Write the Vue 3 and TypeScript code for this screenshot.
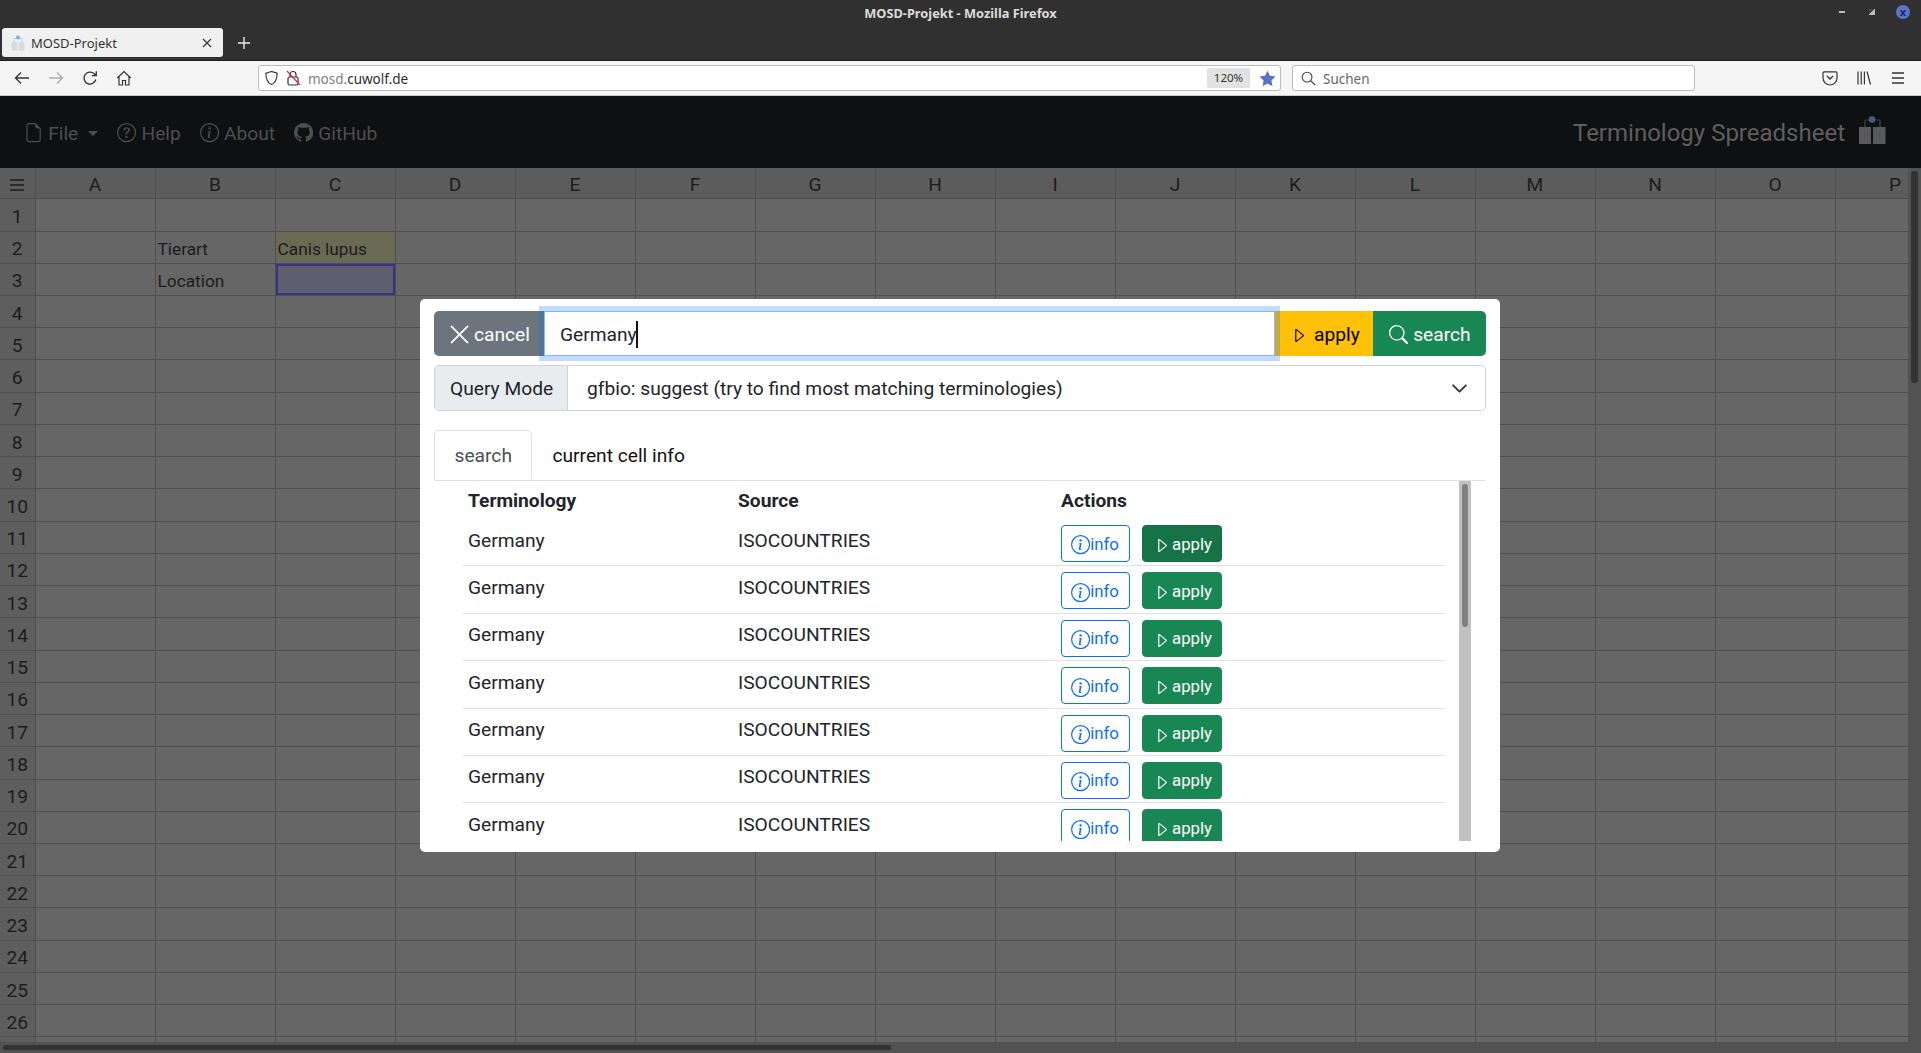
<script setup lang="ts">
const columns: string[] = 'ABCDEFGHIJKLMNOP'.split('')
const rowNumbers: number[] = Array.from({ length: 27 }, (_, i) => i + 1)

function cellText(row: number, col: string): string {
  if (col === 'B' && row === 2) return 'Tierart'
  if (col === 'B' && row === 3) return 'Location'
  if (col === 'C' && row === 2) return 'Canis lupus'
  return ''
}

function cellClass(row: number, col: string): Record<string, boolean> {
  return {
    'cell-found': col === 'C' && row === 2,
    'cell-selected': col === 'C' && row === 3,
  }
}

const results = Array.from({ length: 7 }, (_, i) => ({
  id: i,
  term: 'Germany',
  source: 'ISOCOUNTRIES',
}))

const ICON = {
  play: 'M1 1.300a.4.4 0 0 1 .65-.31l6.300 5.200a.4.4 0 0 1 0 .62l-6.300 5.200A.4.4 0 0 1 1 11.700z',
  circle: 'M8 15A7 7 0 1 1 8 1a7 7 0 0 1 0 14zm0 1A8 8 0 1 0 8 0a8 8 0 0 0 0 16z',
  infoDot: 'm8.93 6.588-2.29.287-.082.38.45.083c.294.07.352.176.288.469l-.738 3.468c-.194.897.105 1.319.808 1.319.545 0 1.178-.252 1.465-.598l.088-.416c-.2.176-.492.246-.686.246-.275 0-.375-.193-.304-.533L8.93 6.588zM9 4.5a1 1 0 1 1-2 0 1 1 0 0 1 2 0z',
  question: 'M5.255 5.786a.237.237 0 0 0 .241.247h.825c.138 0 .248-.113.266-.25.09-.656.54-1.134 1.342-1.134.686 0 1.314.343 1.314 1.168 0 .635-.374.927-.965 1.371-.673.489-1.206 1.06-1.168 1.987l.003.217a.25.25 0 0 0 .25.246h.811a.25.25 0 0 0 .25-.25v-.105c0-.718.273-.927 1.01-1.486.609-.463 1.244-.977 1.244-2.056 0-1.511-1.276-2.241-2.673-2.241-1.267 0-2.655.59-2.75 2.286zm1.557 5.763c0 .533.425.927 1.01.927.609 0 1.028-.394 1.028-.927 0-.552-.42-.94-1.029-.94-.584 0-1.009.388-1.009.94z',
  file: 'M14 4.5V14a2 2 0 0 1-2 2H4a2 2 0 0 1-2-2V2a2 2 0 0 1 2-2h5.5L14 4.5zm-3 0A1.5 1.5 0 0 1 9.5 3V1H4a1 1 0 0 0-1 1v12a1 1 0 0 0 1 1h8a1 1 0 0 0 1-1V4.5h-2z',
  github: 'M8 0C3.58 0 0 3.58 0 8c0 3.54 2.29 6.53 5.47 7.59.4.07.55-.17.55-.38 0-.19-.01-.82-.01-1.49-2.01.37-2.53-.49-2.69-.94-.09-.23-.48-.94-.82-1.13-.28-.15-.68-.52-.01-.53.63-.01 1.08.58 1.23.82.72 1.21 1.87.87 2.33.66.07-.52.28-.87.51-1.07-1.78-.2-3.64-.89-3.64-3.95 0-.87.31-1.59.82-2.15-.08-.2-.36-1.02.08-2.12 0 0 .67-.21 2.2.82.64-.18 1.32-.27 2-.27.68 0 1.36.09 2 .27 1.53-1.04 2.2-.82 2.2-.82.44 1.1.16 1.92.08 2.12.51.56.82 1.27.82 2.15 0 3.07-1.87 3.75-3.65 3.95.29.25.54.73.54 1.48 0 1.07-.01 1.93-.01 2.2 0 .21.15.46.55.38A8.012 8.012 0 0 0 16 8c0-4.42-3.58-8-8-8z',
  x: 'M2.146 2.854a.5.5 0 1 1 .708-.708L8 7.293l5.146-5.147a.5.5 0 0 1 .708.708L8.707 8l5.147 5.146a.5.5 0 0 1-.708.708L8 8.707l-5.146 5.147a.5.5 0 0 1-.708-.708L7.293 8 2.146 2.854Z',
  search: 'M11.742 10.344a6.5 6.5 0 1 0-1.397 1.398h-.001c.03.04.062.078.098.115l3.85 3.85a1 1 0 0 0 1.415-1.414l-3.85-3.85a1.007 1.007 0 0 0-.115-.1zM12 6.5a5.5 5.5 0 1 1-11 0 5.5 5.5 0 0 1 11 0z',
}
</script>

<template>
  <div class="app">
    <header class="titlebar">
      <div class="win-title">MOSD-Projekt - Mozilla Firefox</div>
      <div class="win-controls">
        <span class="win-min"></span>
        <span class="win-max"></span>
        <span class="win-close">x</span>
      </div>
      <div class="tabstrip">
        <div class="ff-tab">
          <svg class="ff-favicon" viewBox="0 0 16 16" width="16" height="16">
            <rect x="1.5" y="7" width="5.8" height="8.5" fill="#d4dbe4" />
            <rect x="8.7" y="7" width="5.8" height="8.5" fill="#d4dbe4" />
            <path d="M4 7V3.5h8V7" fill="none" stroke="#a9c6e2" stroke-width=".8" />
            <circle cx="8" cy="2.6" r="2" fill="#7ab0dc" />
          </svg>
          <span class="ff-tab-label">MOSD-Projekt</span>
          <svg class="ff-tab-close" viewBox="0 0 10 10" width="10" height="10">
            <path d="M1 1l8 8M9 1l-8 8" stroke="#333" stroke-width="1.1" fill="none" />
          </svg>
        </div>
        <svg class="ff-newtab" viewBox="0 0 12 12" width="12" height="12">
          <path d="M6 0v12M0 6h12" stroke="#e8e8e8" stroke-width="1.4" fill="none" />
        </svg>
      </div>
    </header>

    <div class="toolbar">
      <div class="nav-icons">
        <svg viewBox="0 0 16 16" width="16" height="16"><path d="M15 8H1.5M7 2.5 1.5 8 7 13.5" stroke="#333" stroke-width="1.3" fill="none" /></svg>
        <svg viewBox="0 0 16 16" width="16" height="16"><path d="M1 8h13.5M9 2.5 14.5 8 9 13.5" stroke="#aaa" stroke-width="1.3" fill="none" /></svg>
        <svg viewBox="0 0 16 16" width="16" height="16"><path d="M13.8 9.5A6 6 0 1 1 12 3.6L14 5.5M14.3 1.2v4.5H9.8" stroke="#333" stroke-width="1.3" fill="none" /></svg>
        <svg viewBox="0 0 16 16" width="16" height="16"><path d="M1.2 8 8 1.5 14.8 8M3 6.5V15h3.5v-4.5h3V15H13V6.5" stroke="#333" stroke-width="1.2" fill="none" /></svg>
      </div>
      <div class="urlbar">
        <svg class="url-shield" viewBox="0 0 16 16" width="15" height="16"><path d="M8 1 2 2.8c0 6 1 9.8 6 12.2 5-2.4 6-6.2 6-12.2z" stroke="#333" stroke-width="1.2" fill="none" /></svg>
        <svg class="url-lock" viewBox="0 0 16 16" width="16" height="16">
          <rect x="3" y="7" width="10" height="8" rx="1.5" stroke="#333" stroke-width="1.2" fill="none" />
          <path d="M5 7V4.5a3 3 0 0 1 6 0V7" stroke="#333" stroke-width="1.2" fill="none" />
          <path d="M2 1l13 14" stroke="#e22850" stroke-width="1.3" fill="none" />
        </svg>
        <span class="url-text"><span class="url-dim">mosd.</span>cuwolf.de</span>
        <span class="url-zoom">120%</span>
        <svg class="url-star" viewBox="0 0 16 16" width="17" height="17"><path d="M8 .6l2.3 4.9 5.3.7-3.9 3.7 1 5.3L8 12.6l-4.7 2.6 1-5.3L.4 6.2l5.3-.7z" fill="#5571c9" /></svg>
      </div>
      <div class="searchbar">
        <svg viewBox="0 0 16 16" width="15" height="15"><circle cx="6.5" cy="6.5" r="5.2" stroke="#444" stroke-width="1.2" fill="none" /><path d="M10.5 10.5 15 15" stroke="#444" stroke-width="1.4" /></svg>
        <span>Suchen</span>
      </div>
      <div class="tool-icons">
        <svg viewBox="0 0 16 16" width="16" height="16"><path d="M2 1.8h12a1 1 0 0 1 1 1V8a7 7 0 0 1-14 0V2.800a1 1 0 0 1 1-1z" stroke="#333" stroke-width="1.2" fill="none" /><path d="M5 6l3 3 3-3" stroke="#333" stroke-width="1.4" fill="none" /></svg>
        <svg viewBox="0 0 16 16" width="16" height="16"><path d="M2 1.500v13M5.200 1.500v13M8.400 1.500v13M11 1.500l3.500 13" stroke="#333" stroke-width="1.2" fill="none" /></svg>
        <svg viewBox="0 0 16 16" width="16" height="16"><path d="M2 3h12M2 8h12M2 13h12" stroke="#333" stroke-width="1.3" fill="none" /></svg>
      </div>
    </div>

    <main class="page">
      <nav class="navbar">
        <div class="nav-item nav-first">
          <svg viewBox="0 0 16 16" class="nav-icon"><path :d="ICON.file" /></svg>
          <span>File</span>
          <span class="caret"></span>
        </div>
        <div class="nav-item">
          <svg viewBox="0 0 16 16" class="nav-icon"><path :d="ICON.circle" /><path :d="ICON.question" /></svg>
          <span>Help</span>
        </div>
        <div class="nav-item">
          <svg viewBox="0 0 16 16" class="nav-icon"><path :d="ICON.circle" /><path :d="ICON.infoDot" /></svg>
          <span>About</span>
        </div>
        <div class="nav-item">
          <svg viewBox="0 0 16 16" class="nav-icon"><path :d="ICON.github" /></svg>
          <span>GitHub</span>
        </div>
        <div class="brand">
          <span>Terminology Spreadsheet</span>
          <svg class="brand-logo" viewBox="0 0 27 28" width="27" height="28">
            <path d="M6 11V4h15v7M6 4v20M21 4v20" fill="none" stroke="#3a4a58" stroke-width=".7" />
            <rect x="0" y="11" width="12" height="17" fill="#5a5a5a" />
            <rect x="14" y="11" width="12.500" height="17" fill="#5a5a5a" />
            <circle cx="13" cy="3.600" r="3.300" fill="#3d6080" />
            <path d="M6 16v7M20 16v7M18 19h4" stroke="#44546a" stroke-width=".7" fill="none" />
          </svg>
        </div>
      </nav>

      <section class="sheet-wrap">
        <div class="sheet-main">
          <div class="sheet">
            <div class="sheet-row sheet-head">
              <div class="corner">
                <svg viewBox="0 0 14 12" width="14" height="12"><path d="M0 1h14M0 6h14M0 11h14" stroke="#1c1c1c" stroke-width="1.300" fill="none" /></svg>
              </div>
              <div v-for="c in columns" :key="c" class="col-head">{{ c }}</div>
            </div>
            <div v-for="r in rowNumbers" :key="r" class="sheet-row">
              <div class="row-head">{{ r < 27 ? r : '' }}</div>
              <div v-for="c in columns" :key="c" class="cell" :class="cellClass(r, c)">{{ cellText(r, c) }}</div>
            </div>
          </div>
          <div class="vscroll"><div class="vthumb"></div></div>
        </div>
        <div class="hscroll"><div class="hthumb"></div></div>
      </section>

      <div class="backdrop">
        <div class="modal">
          <div class="input-row">
            <button class="btn btn-cancel">
              <svg viewBox="0 0 16 16" class="i23 i-bold"><path :d="ICON.x" /></svg>
              <span>cancel</span>
            </button>
            <div class="term-input">
              <span>Germany</span><span class="text-caret"></span>
            </div>
            <button class="btn btn-apply">
              <svg viewBox="0.4 0.4 8.2 12.2" class="i-play"><path :d="ICON.play" /></svg>
              <span>apply</span>
            </button>
            <button class="btn btn-search">
              <svg viewBox="0 0 16 16" class="i19"><path :d="ICON.search" /></svg>
              <span>search</span>
            </button>
          </div>

          <div class="query-row">
            <div class="query-label">Query Mode</div>
            <div class="query-select">
              <span>gfbio: suggest (try to find most matching terminologies)</span>
              <svg viewBox="0 0 16 16" width="17" height="17"><path d="m2 5 6 6 6-6" fill="none" stroke="#343a40" stroke-width="1.800" stroke-linecap="round" stroke-linejoin="round" /></svg>
            </div>
          </div>

          <div class="tabs">
            <div class="tab tab-active">search</div>
            <div class="tab">current cell info</div>
          </div>

          <div class="results">
            <div class="res-list">
              <div class="res-row res-head">
                <div>Terminology</div>
                <div>Source</div>
                <div>Actions</div>
              </div>
              <div v-for="(item, idx) in results" :key="item.id" class="res-row res-item">
                <div class="res-text">{{ item.term }}</div>
                <div class="res-text">{{ item.source }}</div>
                <div class="res-actions">
                  <button class="sbtn sbtn-info">
                    <svg viewBox="0 0 16 16" class="i19"><path :d="ICON.circle" /><path :d="ICON.infoDot" /></svg>
                    <span>info</span>
                  </button>
                  <button class="sbtn sbtn-apply" :class="{ 'sbtn-hover': idx === 0 }">
                    <svg viewBox="0.4 0.4 8.2 12.2" class="i-play"><path :d="ICON.play" /></svg>
                    <span>apply</span>
                  </button>
                </div>
              </div>
            </div>
            <div class="res-scroll"><div class="res-thumb"></div></div>
          </div>
        </div>
      </div>
    </main>
  </div>
</template>

<style>
html, body { margin: 0; padding: 0; overflow: hidden; }
</style>

<style scoped>
.app {
  width: 1921px;
  height: 1053px;
  display: flex;
  flex-direction: column;
  overflow: hidden;
  font-family: Roboto, "Liberation Sans", sans-serif;
}

/* window chrome */
.titlebar {
  position: relative;
  height: 61px;
  background: #303030;
  box-sizing: border-box;
  border-bottom: 1px solid #1e1e1e;
  flex: none;
}
.win-title {
  text-align: center;
  padding-top: 4px;
  font: 700 12.8px/18px "Noto Sans", sans-serif;
  color: #dcdcdc;
}
.win-controls {
  position: absolute;
  top: 5px;
  right: 11px;
  display: flex;
  align-items: center;
}
.win-min { width: 6px; height: 2px; background: #bbb; }
.win-max { width: 6px; height: 6px; margin-left: 24px; background: linear-gradient(135deg, #444 50%, #bbb 50%); }
.win-close {
  width: 14px;
  height: 14px;
  margin-left: 21px;
  border-radius: 50%;
  background: #5b74c9;
  color: #1f2a55;
  font: 700 11px/13px "Noto Sans", sans-serif;
  text-align: center;
}
.tabstrip {
  position: absolute;
  left: 2px;
  top: 28px;
  display: flex;
  align-items: center;
}
.ff-tab {
  width: 221px;
  height: 29px;
  background: #f0f0f0;
  border-radius: 3px;
  display: flex;
  align-items: center;
  box-sizing: border-box;
  padding: 0 11px 0 8px;
  font: 400 13px "Noto Sans", sans-serif;
  color: #333;
}
.ff-favicon { flex: none; }
.ff-tab-label { flex: 1; margin-left: 5px; }
.ff-newtab { margin-left: 15px; }

.toolbar {
  height: 35px;
  flex: none;
  box-sizing: border-box;
  background: #f5f5f5;
  border-bottom: 1px solid #c8c8c8;
  display: flex;
  align-items: center;
  font-family: "Noto Sans", sans-serif;
}
.nav-icons {
  width: 258px;
  box-sizing: border-box;
  padding-left: 14px;
  display: flex;
  gap: 18px;
}
.urlbar, .searchbar {
  height: 26px;
  box-sizing: border-box;
  background: #fff;
  border: 1px solid #bcbcbc;
  border-radius: 3px;
  display: flex;
  align-items: center;
  font-size: 13.5px;
}
.urlbar > span:first-of-type, .searchbar > span { padding-top: 1px; }
.urlbar { width: 1023px; padding: 0 4px 0 5px; color: #2c2c2c; }
.url-lock { margin-left: 6px; }
.url-text { margin-left: 7px; flex: 1; }
.url-dim { color: #808080; }
.url-zoom {
  width: 43px;
  height: 20px;
  background: #e2e2e2;
  border-radius: 2px;
  font-size: 11.5px;
  line-height: 20px;
  text-align: center;
  color: #333;
}
.url-star { margin-left: 9px; }
.searchbar {
  width: 403px;
  margin-left: 11px;
  padding-left: 8px;
  gap: 7px;
  color: #666;
}
.tool-icons {
  margin-left: 127px;
  display: flex;
  gap: 18px;
}

/* page */
.page {
  position: relative;
  flex: 1;
  min-height: 0;
  display: flex;
  flex-direction: column;
}
.navbar {
  height: 72px;
  flex: none;
  background: #0f1012;
  display: flex;
  align-items: center;
  padding: 2px 35px 0 24px;
  box-sizing: border-box;
  color: #4e4e4e;
  font-size: 19.2px;
}
.nav-item {
  display: flex;
  align-items: center;
  gap: 5px;
  margin-left: 19px;
}
.nav-first { margin-left: 0; }
.nav-icon { width: 19.2px; height: 19.2px; fill: currentColor; }
.caret {
  width: 0;
  height: 0;
  margin-left: 5px;
  border-top: 5.5px solid currentColor;
  border-left: 5.5px solid transparent;
  border-right: 5.5px solid transparent;
}
.brand {
  margin-left: auto;
  display: flex;
  align-items: center;
  gap: 14px;
  font-size: 24px;
  color: #5e5e5e;
}
.brand-logo { margin-top: -7px; }

.sheet-wrap {
  flex: 1;
  min-height: 0;
  display: flex;
  flex-direction: column;
}
.sheet-main {
  flex: 1;
  min-height: 0;
  display: flex;
}
.sheet {
  flex: 1;
  min-width: 0;
  overflow: hidden;
  background: #666;
  color: #1c1c1c;
}
.sheet-row {
  display: grid;
  grid-template-columns: 35.5px repeat(16, 120px);
  height: 32.24px;
  box-sizing: border-box;
  width: 1956px;
}
.sheet-head { height: 31.3px; }
.corner, .col-head, .row-head, .cell {
  box-sizing: border-box;
  border-right: 1px solid #4f4f4f;
  border-bottom: 1px solid #4f4f4f;
  display: flex;
  align-items: center;
  padding-top: 3px;
}
.corner { justify-content: center; background: #5c5c5c; padding-top: 4px; }
.col-head { justify-content: center; background: #5c5c5c; font-size: 19.2px; }
.row-head { justify-content: center; background: #5e5e5e; font-size: 19.2px; }
.cell { padding-left: 2px; padding-right: 2px; font-size: 17.3px; background: #666; white-space: nowrap; }
.cell-found { background: #6a6953; }
.cell-selected {
  background: #5f5e6e;
  box-shadow: inset 0 0 0 2px #3a3085;
}
.vscroll {
  width: 13px;
  flex: none;
  background: #525252;
  box-sizing: border-box;
  padding: 3px 3px 0;
}
.vthumb { height: 212px; border-radius: 3px; background: #313433; }
.hscroll {
  height: 11px;
  flex: none;
  background: #525252;
  box-sizing: border-box;
  padding: 3px;
}
.hthumb { width: 888px; height: 5px; border-radius: 3px; background: #313433; }

/* modal */
.backdrop {
  position: absolute;
  inset: 0;
  display: flex;
  justify-content: center;
  align-items: flex-start;
  padding: 203px 1px 0 0;
}
.modal {
  width: 1080px;
  height: 553px;
  box-sizing: border-box;
  padding: 12px 14px;
  background: #fff;
  border-radius: 5px;
  color: #212529;
  font-size: 19.2px;
  display: flex;
  flex-direction: column;
}
.input-row {
  display: flex;
  height: 45px;
  flex: none;
}
.btn {
  border: 0;
  margin: 0;
  height: 45px;
  box-sizing: border-box;
  display: flex;
  align-items: center;
  font: inherit;
  padding: 2px 0 0;
}
.i23 { width: 23px; height: 23px; fill: currentColor; flex: none; }
.i-bold { stroke: currentColor; stroke-width: .35px; }
.i19 { width: 19.2px; height: 19.2px; fill: currentColor; flex: none; }
.i-play { width: 9px; height: 13px; flex: none; fill: none; stroke: currentColor; stroke-width: 1.1px; stroke-linejoin: round; }
.btn-cancel {
  width: 110px;
  padding-left: 14px;
  gap: 3px;
  background: #6c757d;
  color: #fff;
  border-radius: 5px 0 0 5px;
}
.term-input {
  position: relative;
  z-index: 2;
  flex: 1;
  box-sizing: border-box;
  border: 1px solid #86b7fe;
  box-shadow: 0 0 0 5px rgba(13, 110, 253, .25);
  background: #fff;
  display: flex;
  align-items: center;
  padding: 2px 0 0 15px;
  color: #212529;
}
.text-caret {
  display: inline-block;
  width: 2px;
  height: 27px;
  margin-left: -1px;
  background: #111;
}
.btn-apply {
  width: 98px;
  padding-left: 20px;
  gap: 10px;
  background: #ffc107;
  color: #000;
}
.btn-apply .i-play { margin-top: 2px; }
.btn-search {
  width: 113px;
  padding-left: 16px;
  gap: 5px;
  background: #198754;
  color: #fff;
  border-radius: 0 5px 5px 0;
}
.query-row {
  display: flex;
  height: 46px;
  flex: none;
  margin-top: 9px;
}
.query-label {
  width: 134px;
  box-sizing: border-box;
  padding-left: 15px;
  display: flex;
  align-items: center;
  background: #e9ecef;
  border: 1px solid #ced4da;
  border-radius: 5px 0 0 5px;
}
.query-select {
  flex: 1;
  box-sizing: border-box;
  border: 1px solid #ced4da;
  border-left: 0;
  border-radius: 0 5px 5px 0;
  display: flex;
  align-items: center;
  justify-content: space-between;
  padding: 0 17px 0 19px;
}
.tabs {
  margin-top: 19px;
  height: 50px;
  flex: none;
  display: flex;
  border-bottom: 1px solid #dee2e6;
}
.tab {
  height: 50px;
  box-sizing: border-box;
  padding: 0 19px;
  border: 1px solid transparent;
  display: flex;
  align-items: center;
  color: #111;
}
.tab-active {
  color: #495057;
  background: #fff;
  padding: 0 19.5px;
  border-color: #dee2e6 #dee2e6 #fff;
  border-radius: 5px 5px 0 0;
}
.results {
  height: 360px;
  flex: none;
  margin-right: 15px;
  padding-left: 29px;
  display: flex;
  gap: 14px;
  overflow: hidden;
}
.res-list {
  flex: 1;
  min-width: 0;
}
.res-scroll {
  width: 12px;
  flex: none;
  background: #c1c1c1;
  box-sizing: border-box;
  padding: 3px 3px 0;
}
.res-thumb {
  height: 143px;
  border-radius: 3px;
  background: #7f8080;
}
.res-row {
  display: grid;
  grid-template-columns: 270px 323px 1fr;
  padding-left: 5px;
  box-sizing: border-box;
}
.res-head {
  height: 38px;
  font-weight: 700;
  align-items: center;
  padding-top: 1px;
}
.res-item {
  height: 47.400px;
  border-bottom: 1px solid #dee2e6;
  padding-top: 6px;
}
.res-text { padding-top: 1.5px; line-height: 28px; }
.res-actions { display: flex; gap: 12px; align-items: flex-start; }
.sbtn {
  height: 37px;
  box-sizing: border-box;
  margin: 0;
  font: inherit;
  font-size: 16.8px;
  display: flex;
  align-items: center;
  border-radius: 4px;
  padding: 0;
}
.sbtn-info svg { margin-top: 3px; }
.sbtn-apply .i-play { margin-top: 4px; }
.sbtn-info {
  width: 69px;
  padding-left: 9px;
  background: #fff;
  border: 1px solid #0d6efd;
  color: #0d6efd;
}
.sbtn-apply {
  width: 80px;
  padding-left: 15px;
  gap: 5px;
  background: #198754;
  border: 1px solid #198754;
  color: #fff;
}
.sbtn-hover { background: #157347; border-color: #146c43; }
</style>
